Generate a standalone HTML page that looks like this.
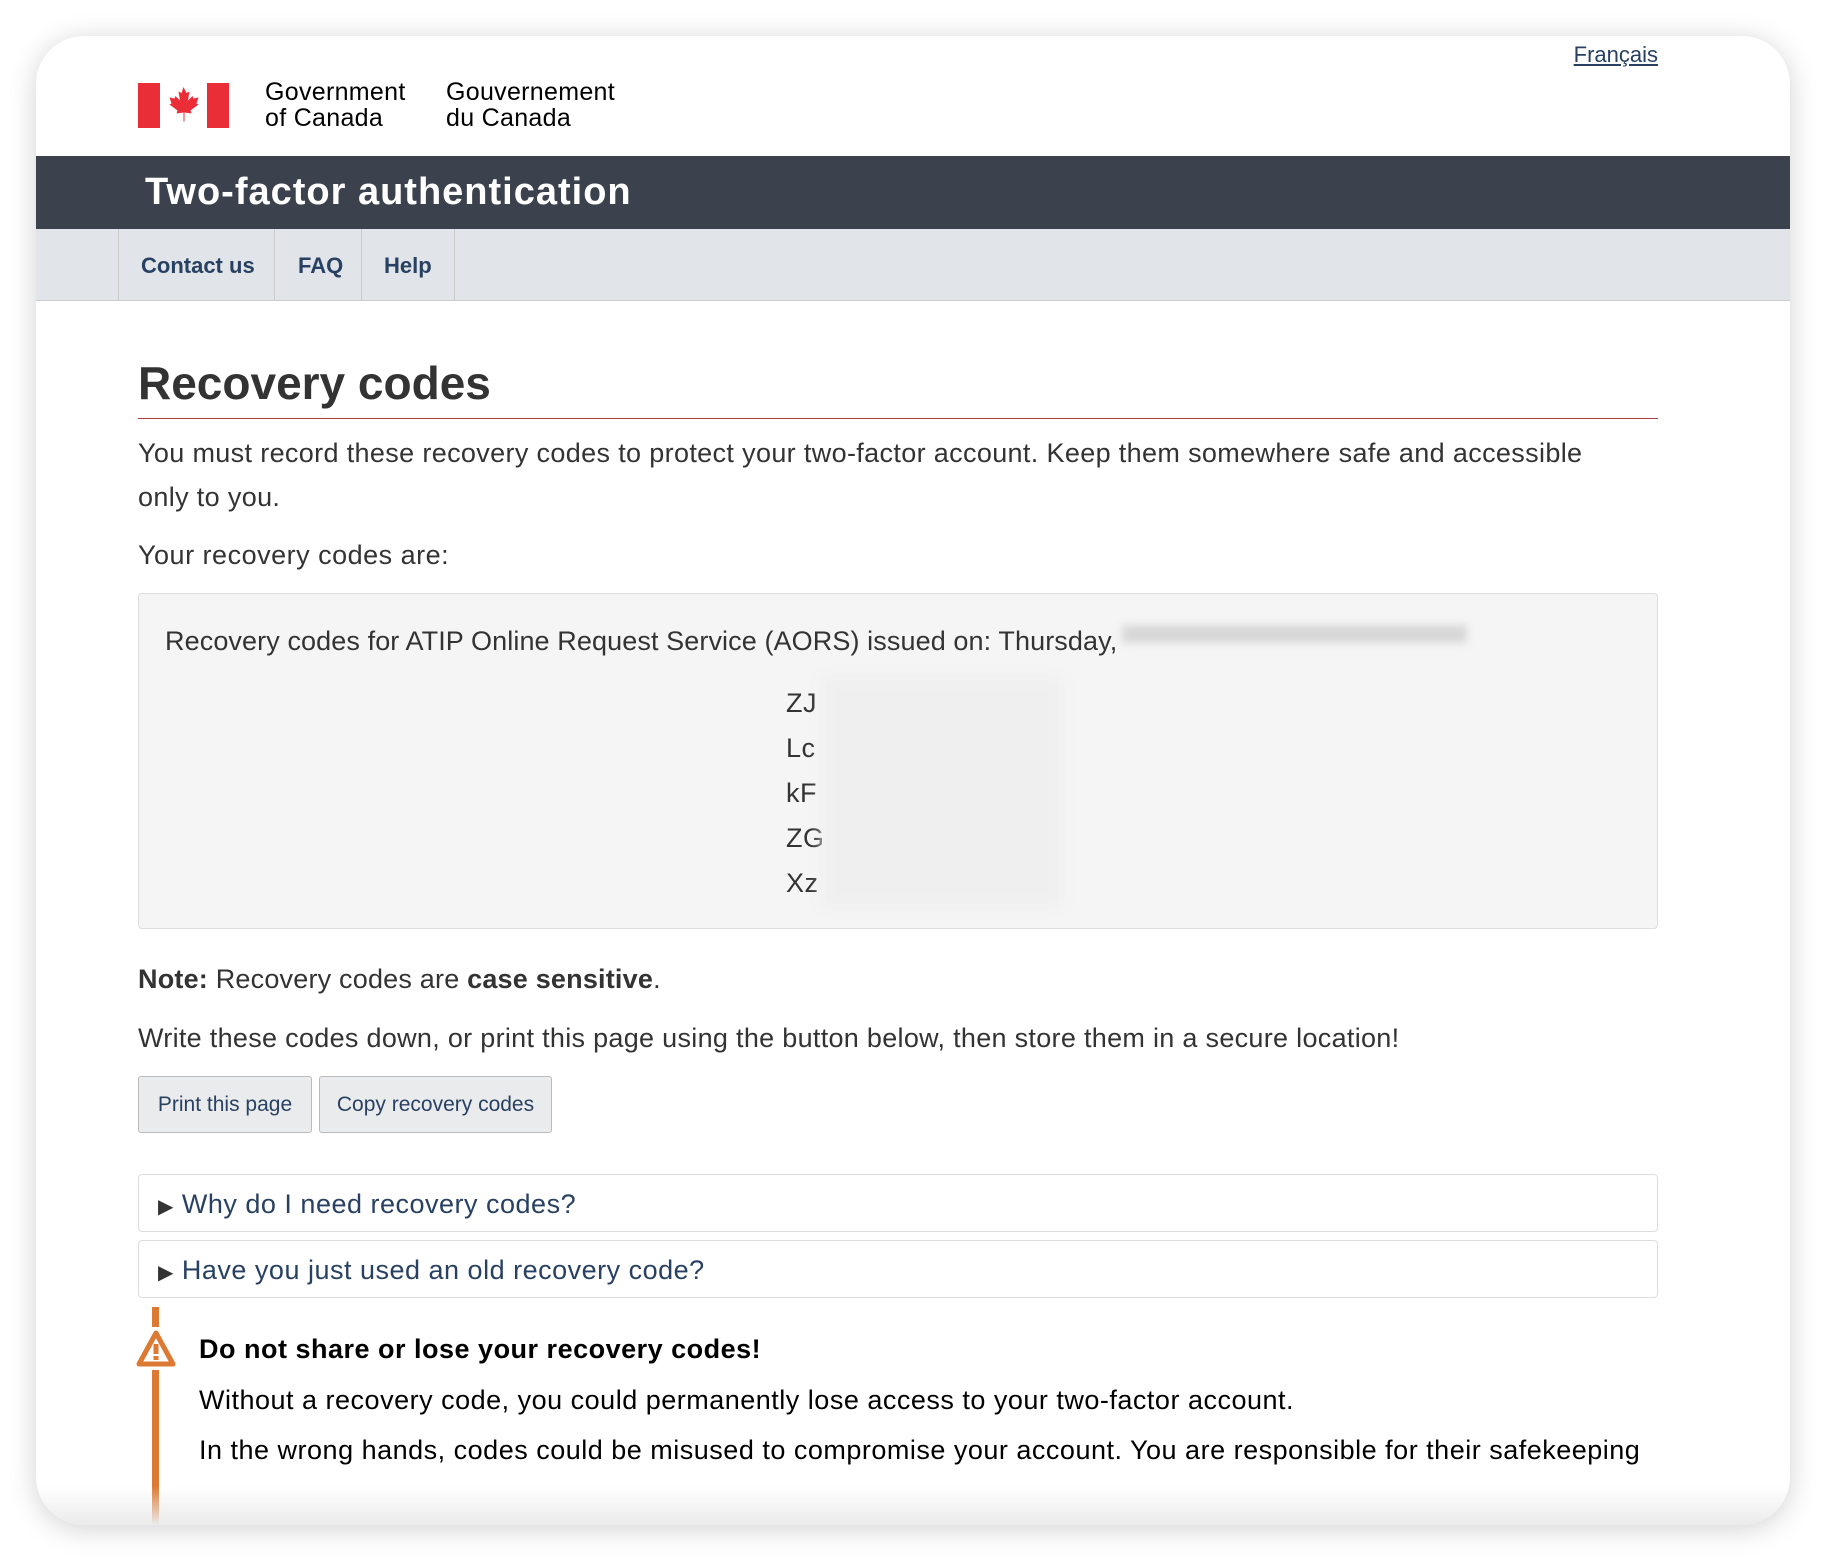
<!DOCTYPE html>
<html><head><meta charset="utf-8"><style>
*{margin:0;padding:0;box-sizing:border-box}
body{width:1826px;height:1562px;background:#fff;font-family:"Liberation Sans",sans-serif;position:relative;overflow:hidden}
.card{position:absolute;left:36px;top:36px;width:1754px;height:1489px;background:#fff;border-radius:48px;box-shadow:0 4px 28px rgba(0,0,0,.18);overflow:hidden}
.abs{position:absolute}
.t{font-size:27px;color:#333;white-space:nowrap;letter-spacing:0.5px}
</style></head><body>
<div class="card">
 <div class="abs" style="left:102px;top:47px;width:91px;height:45px">
  <svg width="91" height="45" viewBox="0 0 91 45"><rect x="0" y="0" width="22" height="45" fill="#eb2d37"/><rect x="69" y="0" width="22" height="45" fill="#eb2d37"/>
  <path d="M45.5 4 l3 6 3-1.5 -1.5 9 4.5-4.5 1 2.5 5-1 -2 6 2 1 -8 6 1 3 -7-1 v9 h-1 v-9 l-7 1 1-3 -8-6 2-1 -2-6 5 1 1-2.5 4.5 4.5 -1.5-9 3 1.5z" fill="#eb2d37"/></svg>
 </div>
 <div class="abs" style="left:229px;top:43px;font-size:25px;line-height:26px;color:#000;letter-spacing:0.3px">Government<br>of Canada</div>
 <div class="abs" style="left:410px;top:43px;font-size:25px;line-height:26px;color:#000;letter-spacing:0.3px">Gouvernement<br>du Canada</div>
 <div class="abs" style="right:132px;top:6px;font-size:22px;color:#284162;text-decoration:underline">Français</div>
 <div class="abs" style="left:0;top:120px;width:1754px;height:73px;background:#3b424d"></div>
 <div class="abs" style="left:109px;top:135px;font-size:38px;font-weight:bold;color:#fff;letter-spacing:1px">Two-factor authentication</div>
 <div class="abs" style="left:0;top:193px;width:1754px;height:72px;background:#e1e4e8;border-bottom:1px solid #ccc"></div>
 <div class="abs" style="left:82px;top:193px;height:72px;border-left:1px solid #ccc;border-right:1px solid #ccc;width:157px"></div>
 <div class="abs" style="left:239px;top:193px;height:72px;border-right:1px solid #ccc;width:87px"></div>
 <div class="abs" style="left:326px;top:193px;height:72px;border-right:1px solid #ccc;width:93px"></div>
 <div class="abs" style="left:105px;top:217px;font-size:22px;font-weight:bold;color:#284162">Contact us</div>
 <div class="abs" style="left:262px;top:217px;font-size:22px;font-weight:bold;color:#284162">FAQ</div>
 <div class="abs" style="left:348px;top:217px;font-size:22px;font-weight:bold;color:#284162">Help</div>
 <div class="abs" style="left:102px;top:320px;font-size:46px;font-weight:bold;color:#333">Recovery codes</div>
 <div class="abs" style="left:102px;top:382px;width:1520px;height:1px;background:#af3c43"></div>
 <div class="abs t" style="left:102px;top:395px;line-height:44px;white-space:normal;width:1480px;letter-spacing:0.35px">You must record these recovery codes to protect your two-factor account. Keep them somewhere safe and accessible only to you.</div>
 <div class="abs t" style="left:102px;top:504px">Your recovery codes are:</div>
 <div class="abs" style="left:102px;top:557px;width:1520px;height:336px;background:#f5f5f5;border:1px solid #ddd;border-radius:4px"></div>
 <div class="abs t" style="left:129px;top:590px;letter-spacing:0.1px">Recovery codes for ATIP Online Request Service (AORS) issued on: Thursday,</div>
 <div class="abs" style="left:1086px;top:589px;width:345px;height:18px;background:#ccc;filter:blur(4px);opacity:.7"></div>
 <div class="abs t" style="left:750px;top:645px;line-height:45px">ZJ<br>Lc<br>kF<br>ZG<br>Xz</div>
 <div class="abs" style="left:786px;top:641px;width:240px;height:230px;background:#efefef;filter:blur(6px)"></div>
 <div class="abs t" style="left:102px;top:928px;letter-spacing:0.2px"><b>Note:</b> Recovery codes are <b>case sensitive</b>.</div>
 <div class="abs t" style="left:102px;top:987px;letter-spacing:0.3px">Write these codes down, or print this page using the button below, then store them in a secure location!</div>
 <div class="abs" style="left:102px;top:1040px;width:174px;height:57px;background:#eaebed;border:1px solid #bbb;border-radius:3px;font-size:21px;color:#284162;line-height:55px;text-align:center">Print this page</div>
 <div class="abs" style="left:283px;top:1040px;width:233px;height:57px;background:#eaebed;border:1px solid #bbb;border-radius:3px;font-size:21px;color:#284162;line-height:55px;text-align:center">Copy recovery codes</div>
 <div class="abs" style="left:102px;top:1138px;width:1520px;height:58px;border:1px solid #ddd;border-radius:4px"></div>
 <div class="abs t" style="left:122px;top:1153px;color:#284162"><span style="font-size:20px;color:#333">▶</span> Why do I need recovery codes?</div>
 <div class="abs" style="left:102px;top:1204px;width:1520px;height:58px;border:1px solid #ddd;border-radius:4px"></div>
 <div class="abs t" style="left:122px;top:1219px;color:#284162"><span style="font-size:20px;color:#333">▶</span> Have you just used an old recovery code?</div>
 <div class="abs" style="left:116px;top:1271px;width:7px;height:20px;background:#dc7a33"></div>
 <div class="abs" style="left:116px;top:1334px;width:7px;height:154px;background:#dc7a33"></div>
 <svg class="abs" style="left:100px;top:1294px" width="40" height="38" viewBox="0 0 40 38"><path d="M20 3 L37 34 H3 Z" fill="none" stroke="#dc7a33" stroke-width="5" stroke-linejoin="round"/><rect x="17.5" y="14" width="5" height="10" fill="#dc7a33"/><rect x="17.5" y="26" width="5" height="4" fill="#dc7a33"/></svg>
 <div class="abs t" style="left:163px;top:1298px;font-weight:bold;color:#000">Do not share or lose your recovery codes!</div>
 <div class="abs t" style="left:163px;top:1349px;color:#000">Without a recovery code, you could permanently lose access to your two-factor account.</div>
 <div class="abs t" style="left:163px;top:1399px;color:#000">In the wrong hands, codes could be misused to compromise your account. You are responsible for their safekeeping</div>
 <div class="abs" style="left:0;top:1450px;width:1754px;height:39px;background:linear-gradient(rgba(255,255,255,0),rgba(235,235,235,1))"></div>
</div>
</body></html>
